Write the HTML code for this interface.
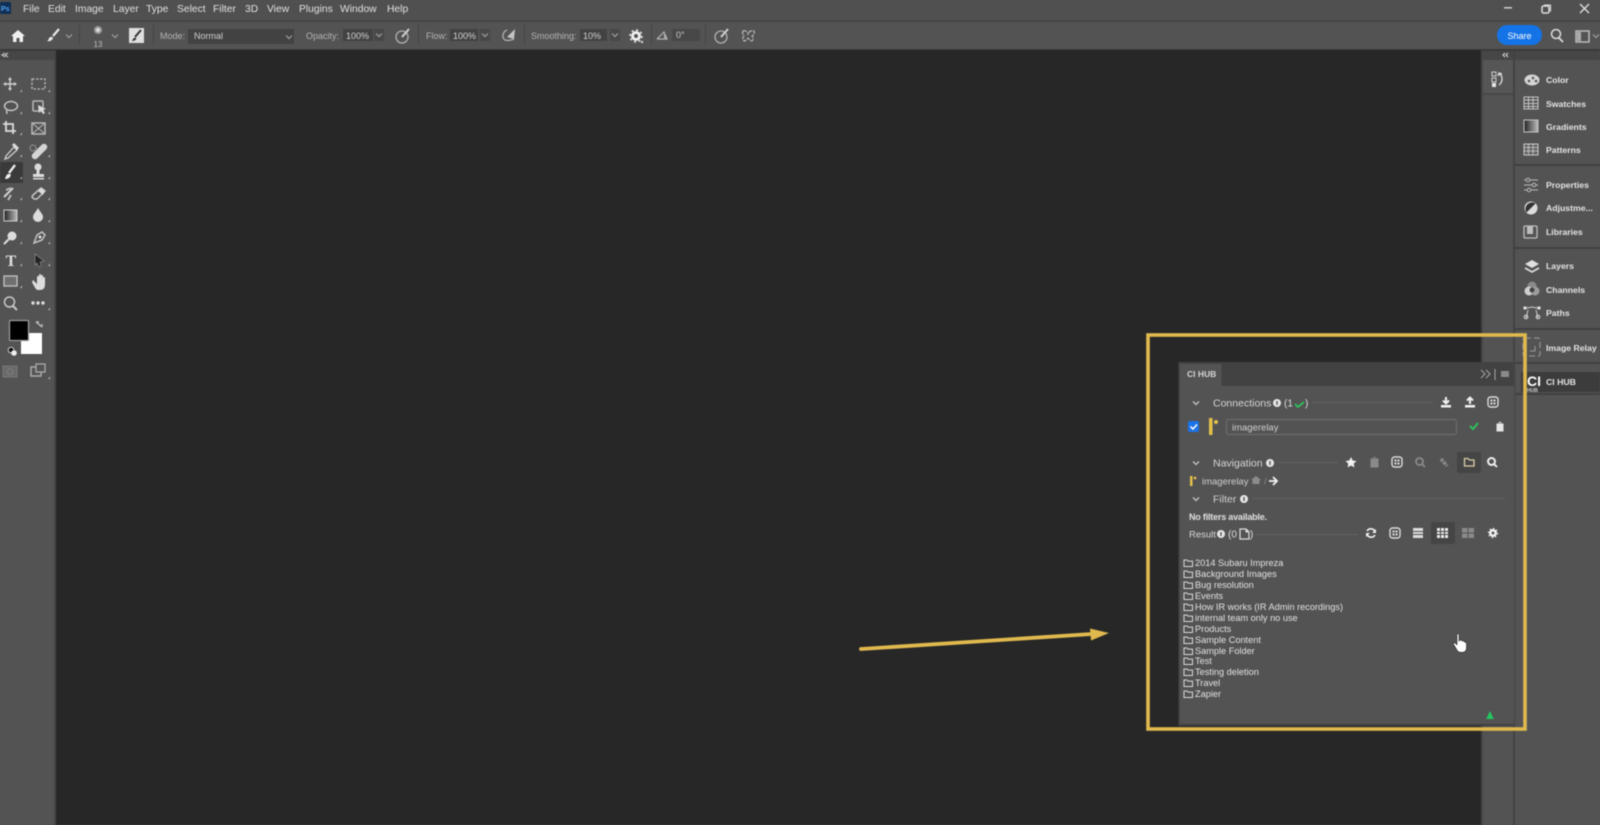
<!DOCTYPE html>
<html><head><meta charset="utf-8"><title>Photoshop CI HUB</title>
<style>
html,body{margin:0;padding:0;width:1600px;height:825px;overflow:hidden;background:#535353}
svg{display:block;position:absolute;left:0;top:0;filter:blur(.55px)}
text{font-family:"Liberation Sans",sans-serif;fill:#dcdcdc;font-size:10px}
.m{font-size:10.3px;fill:#e0e0e0}
.o{font-size:9px;fill:#b4b4b4}
.f{font-size:9.2px;fill:#e2e2e2}
.r{font-size:8.7px;fill:#e4e4e4;font-weight:bold}
.c{font-size:10px;fill:#dedede}
.i{fill:none;stroke:#dcdcdc;stroke-width:1.5}
.s{fill:#dcdcdc}
</style></head><body>
<svg width="1600" height="825" viewBox="0 0 1600 825" xmlns="http://www.w3.org/2000/svg">
<defs>
<g id="fold"><path d="M1 2h3l1 1.100h4.500v5.400H1z" fill="none" stroke="#d8d8d8" stroke-width="1"/></g>
<g id="chev"><path d="M-3-1.500 0 1.500 3-1.500" fill="none" stroke="#c4c4c4" stroke-width="1.300"/></g>
<g id="chevd"><path d="M-3-1.500 0 1.500 3-1.500" fill="none" stroke="#a0a0a0" stroke-width="1.200"/></g>
<g id="info"><circle r="4" fill="#e6e6e6"/><rect x="-.7" y="-2" width="1.400" height="4" fill="#555"/></g>
<g id="grid"><rect x="-5" y="-5" width="10" height="10" rx="2.500" fill="none" stroke="#dcdcdc" stroke-width="1.400"/><rect x="-2.500" y="-2.500" width="2" height="2" fill="#dcdcdc"/><rect x=".5" y="-2.500" width="2" height="2" fill="#dcdcdc"/><rect x="-2.500" y=".5" width="2" height="2" fill="#dcdcdc"/><rect x=".5" y=".5" width="2" height="2" fill="#dcdcdc"/></g>
<g id="tri"><path d="M2 0v-2.500L0 0z" fill="#bdbdbd"/></g>
<radialGradient id="dot"><stop offset="0" stop-color="#fff"/><stop offset="1" stop-color="#666"/></radialGradient>
<linearGradient id="gr"><stop offset="0" stop-color="#222"/><stop offset="1" stop-color="#bbb"/></linearGradient>
</defs>

<!-- base -->
<rect width="1600" height="825" fill="#535353"/>
<rect x="0" y="0" width="1600" height="20" fill="#505050"/>
<rect x="0" y="20" width="1600" height="2" fill="#454545"/>
<rect x="0" y="22" width="1600" height="27" fill="#535353"/>
<rect x="0" y="49" width="1600" height="2" fill="#3a3a3a"/>
<rect x="56" y="50" width="1425" height="775" fill="#272727"/>
<rect x="0" y="51" width="56" height="9" fill="#464646"/>
<rect x="1481" y="51" width="119" height="9" fill="#464646"/>
<rect x="54" y="51" width="2" height="774" fill="#454545"/>
<rect x="1481" y="51" width="2" height="774" fill="#454545"/>
<rect x="1513" y="51" width="2" height="774" fill="#424242"/>
<path d="M5 53 2 55l3 2M8 53 5 55l3 2" class="i" style="stroke-width:1"/>
<path d="M1505 53l-2 2 2 2M1508 53l-2 2 2 2" class="i" style="stroke-width:1"/>

<!-- title bar -->
<rect x="0" y="2" width="11" height="12" rx="1" fill="#0f2f57"/>
<text x="1" y="11" style="font-size:7px;fill:#4ea4f2;font-weight:bold">Ps</text>
<text class="m" x="23" y="12">File</text>
<text class="m" x="48" y="12">Edit</text>
<text class="m" x="75" y="12">Image</text>
<text class="m" x="113" y="12">Layer</text>
<text class="m" x="146" y="12">Type</text>
<text class="m" x="177" y="12">Select</text>
<text class="m" x="213" y="12">Filter</text>
<text class="m" x="245" y="12">3D</text>
<text class="m" x="267" y="12">View</text>
<text class="m" x="299" y="12">Plugins</text>
<text class="m" x="340" y="12">Window</text>
<text class="m" x="387" y="12">Help</text>
<rect x="1504" y="7" width="8" height="1.600" fill="#c8c8c8"/>
<rect x="1542" y="6" width="7" height="7" rx="1.500" class="i"/><path d="M1544 5h6.500v6.500" class="i" style="stroke-width:1.100"/>
<path d="M1580 4l9 9M1589 4l-9 9" class="i" style="stroke-width:1.400"/>

<!-- options bar -->
<path d="M18 30l7 6h-2v6h-3.500v-4h-3v4H13v-6h-2z" fill="#f0f0f0"/>
<path d="M59 29 53 36" stroke="#e8e8e8" stroke-width="2.200" fill="none"/><path d="M49 38c2-2 4-1 4 0s-2 4-6 3c1-.5 2-1.500 2-3z" fill="#e8e8e8"/>
<use href="#chevd" x="69" y="36"/>
<rect x="79" y="25" width="1" height="19" fill="#444"/>
<circle cx="98" cy="30" r="4.500" fill="url(#dot)"/>
<text x="98" y="47" text-anchor="middle" style="font-size:8px;fill:#bdbdbd">13</text>
<use href="#chevd" x="115" y="36"/>
<rect x="129" y="28" width="15" height="15" fill="#dedede"/>
<path d="M141 30 135 37" stroke="#333" stroke-width="2"/><path d="M132 41c1-3 3-4 4-3s-1 3-4 3z" fill="#333"/>
<rect x="153" y="25" width="1" height="19" fill="#444"/>
<text class="o" x="160" y="39">Mode:</text>
<rect x="188" y="29" width="106" height="15" fill="#424242"/>
<text class="o" x="194" y="39" style="fill:#cfcfcf">Normal</text>
<use href="#chevd" x="289" y="37"/>
<text class="o" x="306" y="39">Opacity:</text>
<rect x="343" y="29" width="30" height="12" fill="#424242"/>
<text class="o" x="346" y="39" style="fill:#d2d2d2">100%</text>
<rect x="374" y="29" width="10" height="12" fill="#484848"/><use href="#chevd" x="379" y="35"/>
<circle cx="402" cy="37" r="6" fill="none" stroke="#b0b0b0" stroke-width="1.300"/><path d="M402 37l7-8" stroke="#d0d0d0" stroke-width="2"/>
<rect x="418" y="25" width="1" height="19" fill="#444"/>
<text class="o" x="426" y="39">Flow:</text>
<rect x="450" y="29" width="28" height="12" fill="#424242"/>
<text class="o" x="453" y="39" style="fill:#d2d2d2">100%</text>
<rect x="480" y="29" width="10" height="12" fill="#484848"/><use href="#chevd" x="485" y="35"/>
<path d="M507 30c-5 2-5 8-2 10 3 1 7 0 9-1" fill="none" stroke="#b0b0b0" stroke-width="1.300"/><path d="M507 37l8-8-1 10z" fill="#c4c4c4"/>
<rect x="524" y="25" width="1" height="19" fill="#444"/>
<text class="o" x="531" y="39">Smoothing:</text>
<rect x="580" y="29" width="27" height="12" fill="#424242"/>
<text class="o" x="583" y="39" style="fill:#d2d2d2">10%</text>
<rect x="610" y="29" width="10" height="12" fill="#484848"/><use href="#chevd" x="615" y="35"/>
<circle cx="636" cy="36" r="3.500" fill="none" stroke="#f0f0f0" stroke-width="3"/><circle cx="636" cy="36" r="6" fill="none" stroke="#f0f0f0" stroke-width="1.500" stroke-dasharray="2 2.700"/>
<rect x="641" y="41" width="2" height="2" fill="#ddd"/>
<rect x="651" y="25" width="1" height="19" fill="#444"/>
<path d="M657 39h10l-3-7-7 7M664 35l1.500 4" fill="none" stroke="#b4b4b4" stroke-width="1.200"/>
<rect x="672" y="29" width="28" height="12" fill="#484848"/>
<text class="o" x="676" y="38" style="fill:#c8c8c8">0°</text>
<rect x="705" y="25" width="1" height="19" fill="#444"/>
<circle cx="721" cy="37" r="6" fill="none" stroke="#b0b0b0" stroke-width="1.300"/><path d="M721 37l7-8" stroke="#d0d0d0" stroke-width="2"/>
<path d="M743 31c3-1 5 1 5 4 0-3 3-5 6-4 1 3-1 4-2 5 1 1 2 3 0 5-2 0-3-2-4-3-1 1-2 3-4 3-2-2-1-4 0-5-1-1-2-3-1-5z" fill="none" stroke="#b8b8b8" stroke-width="1.200" stroke-dasharray="4 1"/>
<rect x="1497" y="25" width="45" height="20" rx="10" fill="#1473e6"/>
<text x="1519.500" y="39" text-anchor="middle" style="font-size:9px;fill:#fff">Share</text>
<circle cx="1556" cy="34" r="4.500" class="i"/><path d="M1559 38l4 4" class="i" style="stroke-width:1.800"/>
<rect x="1576" y="31" width="13" height="11" class="i" style="stroke:#bbb"/><rect x="1577" y="32" width="4" height="9" fill="#aaa"/>
<use href="#chevd" x="1596" y="36"/>

<!-- tools -->
<g transform="translate(10 84)"><path d="M0-6v12M-6 0h12" class="i" style="stroke-width:1.400;stroke:#cfcfcf"/><path d="M-2-4 0-7 2-4zM-2 4 0 7 2 4zM-4-2-7 0-4 2zM4-2 7 0 4 2z" fill="#cfcfcf"/></g><use href="#tri" x="20" y="92"/>
<rect x="32" y="79" width="13" height="10" fill="none" stroke="#b8b8b8" stroke-width="1.300" stroke-dasharray="2.500 1.500"/><use href="#tri" x="48" y="92"/>
<ellipse cx="11" cy="106" rx="6.500" ry="4.500" class="i" style="stroke:#c4c4c4"/><path d="M7 110c-1 2 0 3 0 4" class="i" style="stroke:#c4c4c4"/><use href="#tri" x="20" y="114"/>
<rect x="33" y="101" width="10" height="10" rx="1" class="i" style="stroke:#b8b8b8"/><path d="M38 105l8 4-3 1 2 3-2 1-2-3-2 2z" class="s"/><use href="#tri" x="48" y="114"/>
<path d="M6 121v10h10M3 124h10v10" class="i" style="stroke-width:1.800"/><use href="#tri" x="20" y="135"/>
<rect x="32" y="123" width="13" height="11" class="i" style="stroke:#b8b8b8"/><path d="M32 123l13 11M45 123l-13 11" class="i" style="stroke-width:1;stroke:#b8b8b8"/>
<path d="M6 156l8-9 3 3-9 8-3 1z" fill="none" stroke="#cfcfcf" stroke-width="1.300"/><path d="M13 144l5 5" stroke="#dcdcdc" stroke-width="3"/><use href="#tri" x="20" y="157"/>
<path d="M35 156l9-9" stroke="#d4d4d4" stroke-width="6.500" stroke-linecap="round"/><circle cx="33" cy="148" r="3" fill="none" stroke="#bbb" stroke-dasharray="1.500 1"/><use href="#tri" x="48" y="157"/>
<rect x="0" y="162" width="23" height="21" fill="#3a3a3a"/>
<path d="M15 165 9 173" stroke="#f0f0f0" stroke-width="2.300"/><path d="M5 179c1-4 3-6 5-5s0 5-5 5z" fill="#f0f0f0"/><use href="#tri" x="20" y="179"/>
<circle cx="38" cy="167" r="3.500" class="s"/><rect x="36.500" y="169" width="3" height="5" class="s"/><rect x="33" y="174" width="11" height="3" class="s"/><rect x="33" y="178" width="11" height="1.500" class="s"/><use href="#tri" x="48" y="179"/>
<path d="M4 197l9-9" stroke="#d0d0d0" stroke-width="2"/><path d="M6 190l5-2M11 195l-3 5" stroke="#bdbdbd" stroke-width="2"/><use href="#tri" x="20" y="200"/>
<path d="M33 195l8-7 4 3-8 8h-3l-2-2z" class="i" style="stroke:#c4c4c4"/><path d="M38 191l5 4 2-4-3-3z" class="s"/><use href="#tri" x="48" y="200"/>
<rect x="4" y="210" width="13" height="11" fill="url(#gr)" stroke="#d0d0d0"/><use href="#tri" x="20" y="222"/>
<path d="M38 208c-2 4-5 6-5 9a5 5 0 0 0 10 0c0-3-3-5-5-9z" class="s"/><use href="#tri" x="48" y="222"/>
<circle cx="12" cy="236" r="4.500" class="s"/><path d="M9 239l-5 5" class="i" style="stroke-width:2"/><use href="#tri" x="20" y="244"/>
<path d="M34 243l3-8 5-3 3 3-3 5-8 3z" class="i" style="stroke:#c4c4c4"/><circle cx="40" cy="237" r="1.500" class="s"/><use href="#tri" x="48" y="244"/>
<text x="11" y="266" text-anchor="middle" style="font-family:'Liberation Serif',serif;font-size:16px;font-weight:bold;fill:#e0e0e0">T</text><use href="#tri" x="20" y="266"/>
<path d="M35 254l9 7-4 1 1 4-2 1-2-4-2 2z" fill="#222" stroke="#999" stroke-width=".6"/><use href="#tri" x="48" y="266"/>
<rect x="4" y="276" width="13" height="10" fill="#6f6f6f" stroke="#c4c4c4" stroke-width="1.300"/><use href="#tri" x="20" y="288"/>
<path d="M33 280l4 4v-7a1 1 0 0 1 2 0v5-7a1 1 0 0 1 2 0v7-6a1 1 0 0 1 2 0v6-4a1 1 0 0 1 2 0v7c0 3-2 5-5 5h-2c-2 0-3-2-6-8z" class="s"/>
<circle cx="9.500" cy="302" r="5" class="i" style="stroke:#c8c8c8"/><path d="M13 306l4 4" class="i" style="stroke-width:2;stroke:#c8c8c8"/>
<circle cx="33" cy="303" r="1.700" class="s"/><circle cx="38" cy="303" r="1.700" class="s"/><circle cx="43" cy="303" r="1.700" class="s"/><use href="#tri" x="48" y="310"/>
<rect x="21" y="333" width="21" height="21" fill="#fff"/>
<rect x="9.500" y="320.500" width="19" height="20" rx="1" fill="#000" stroke="#9a9a9a" stroke-width="1.300"/>
<path d="M36 322l6 5M36 322h3M42 327v-3" class="i" style="stroke-width:1.400;stroke:#bbb"/>
<circle cx="11" cy="350" r="2.800" fill="#111" stroke="#ccc"/><circle cx="14" cy="353" r="2.800" fill="#eee"/>
<rect x="3" y="366" width="14" height="11" fill="#6a6a6a" stroke="#777"/><circle cx="10" cy="371.500" r="3" fill="none" stroke="#7c7c7c"/>
<rect x="31" y="367" width="10" height="9" class="i" style="stroke:#aaa"/><rect x="36" y="364" width="9" height="8" fill="#535353" stroke="#aaa" stroke-width="1.300"/><use href="#tri" x="48" y="379"/>

<!-- right collapsed column -->
<rect x="1483" y="60" width="30" height="33" fill="#565656"/><rect x="1483" y="93" width="30" height="2" fill="#484848"/>
<rect x="1492" y="72" width="4" height="4" fill="none" stroke="#cfcfcf"/><rect x="1492" y="78" width="4" height="4" fill="none" stroke="#cfcfcf"/><rect x="1492" y="83" width="4" height="4" fill="#e6e6e6"/>
<path d="M1499 74c4 1 4 8 0 11M1498 76l1-3 3 1" class="i" style="stroke-width:1.300"/>

<!-- right panel list -->
<rect x="1515" y="164" width="85" height="2" fill="#414141"/>
<rect x="1515" y="247" width="85" height="2" fill="#414141"/>
<rect x="1515" y="328" width="85" height="2" fill="#414141"/>
<rect x="1515" y="362" width="85" height="2" fill="#414141"/>
<rect x="1515" y="393" width="85" height="2" fill="#414141"/>
<rect x="1521" y="372" width="79" height="20" fill="#3c3c3c"/>

<ellipse cx="1532" cy="80" rx="7.500" ry="5.500" fill="#d4d4d4"/><circle cx="1529" cy="81" r="1.300" fill="#535353"/><circle cx="1533" cy="78" r="1.300" fill="#535353"/><circle cx="1536" cy="81" r="1.300" fill="#535353"/>
<text class="r" x="1546" y="83">Color</text>
<rect x="1524" y="97" width="14" height="12" fill="none" stroke="#c4c4c4"/><path d="M1524 100h14M1524 103.500h14M1524 106.500h14M1528.500 97v12M1533 97v12" stroke="#c4c4c4" stroke-width="1"/>
<text class="r" x="1546" y="107">Swatches</text>
<rect x="1524" y="120" width="14" height="12" fill="url(#gr)" stroke="#c4c4c4"/>
<text class="r" x="1546" y="130">Gradients</text>
<rect x="1524" y="144" width="14" height="11" fill="#666" stroke="#c4c4c4"/><path d="M1524 147.500h14M1524 151h14M1528.500 144v11M1533 144v11" stroke="#e0e0e0" stroke-dasharray="1.500 1"/>
<text class="r" x="1546" y="153">Patterns</text>
<path d="M1524 180h14M1524 185h14M1524 190h14" stroke="#b8b8b8"/><circle cx="1528" cy="180" r="1.800" fill="#535353" stroke="#b8b8b8"/><circle cx="1534" cy="185" r="1.800" fill="#535353" stroke="#b8b8b8"/><circle cx="1529" cy="190" r="1.800" fill="#535353" stroke="#b8b8b8"/>
<text class="r" x="1546" y="188">Properties</text>
<circle cx="1531" cy="208" r="6.500" fill="#ddd"/><path d="M1526.500 212.500a6.500 6.500 0 0 1 9-9z" fill="#333"/>
<text class="r" x="1546" y="211">Adjustme...</text>
<rect x="1524" y="226" width="13" height="12" rx="1" fill="none" stroke="#bdbdbd" stroke-width="1.300"/><rect x="1527" y="226" width="6" height="8" fill="#bdbdbd"/>
<text class="r" x="1546" y="235">Libraries</text>
<path d="M1532 260l7 4-7 4-7-4z" fill="#e0e0e0"/><path d="M1525 268l7 4 7-4" fill="none" stroke="#e0e0e0" stroke-width="1.600"/>
<text class="r" x="1546" y="269">Layers</text>
<circle cx="1532" cy="286" r="4.500" fill="#8a8a8a"/><circle cx="1529" cy="291" r="4.500" fill="#cfcfcf"/><circle cx="1535" cy="291" r="4.500" fill="#9c9c9c"/><circle cx="1532" cy="290" r="2.500" fill="#444"/>
<text class="r" x="1546" y="293">Channels</text>
<path d="M1525 308c3 0 4 0 7-1 3 1 4 1 7 1M1528 310l-2 8M1536 310l2 8" fill="none" stroke="#cfcfcf"/><rect x="1523.500" y="306.500" width="3" height="3" fill="#ddd"/><rect x="1537.500" y="306.500" width="3" height="3" fill="#ddd"/><circle cx="1526" cy="317" r="1.800" fill="none" stroke="#ddd"/><circle cx="1538" cy="317" r="1.800" fill="none" stroke="#ddd"/>
<text class="r" x="1546" y="316">Paths</text>
<rect x="1523" y="338" width="17" height="18" rx="2" fill="none" stroke="#8e8e8e" stroke-width="1.300" stroke-dasharray="6 3"/><path d="M1535 346v5h-5" fill="none" stroke="#9c9c9c"/>
<text class="r" x="1546" y="351">Image Relay</text>
<text x="1527" y="386" style="font-size:14px;font-weight:bold;fill:#fff">CI</text>
<text x="1527" y="392" style="font-size:5px;font-weight:bold;fill:#ccc">HUB</text>
<text class="r" x="1546" y="385">CI HUB</text>

<!-- CI HUB panel -->
<rect x="1179.500" y="362" width="335.500" height="364" fill="#535353"/>
<rect x="1179.500" y="362" width="335.500" height="24" fill="#424242"/>
<rect x="1179.500" y="364" width="42" height="23" fill="#535353"/>
<rect x="1179.500" y="724" width="335.500" height="2" fill="#414141"/>
<rect x="1514" y="362" width="1.500" height="364" fill="#484848"/>
<rect x="1178.500" y="362" width="1.500" height="364" fill="#474747"/>
<text x="1187" y="377" style="font-size:8.500px;font-weight:bold;fill:#d6d6d6">CI HUB</text>
<path d="M1481 370l4 4-4 4M1486 370l4 4-4 4" fill="none" stroke="#a8a8a8" stroke-width="1"/>
<rect x="1494.500" y="369" width="1" height="11" fill="#a8a8a8"/>
<rect x="1501" y="371" width="8" height="6" fill="#8a8a8a"/>

<use href="#chev" x="1196" y="403"/>
<text x="1213" y="406.500" style="font-size:10.500px;fill:#d6d6d6">Connections</text>
<use href="#info" x="1277" y="403"/>
<text x="1284" y="406.500" class="c">(1</text>
<path d="M1295 404l3 3 6-5" fill="none" stroke="#2fbf5b" stroke-width="1.800"/>
<text x="1305" y="406.500" class="c">)</text>
<rect x="1312" y="402" width="121" height="1" fill="#636363"/>

<path d="M1446 397v6M1443 400.500l3 3 3-3" stroke="#f0f0f0" fill="none" stroke-width="2"/><rect x="1441" y="405" width="10" height="2.500" fill="#f0f0f0"/>
<path d="M1470 404v-6M1467 400.500l3-3 3 3" stroke="#f0f0f0" fill="none" stroke-width="2"/><rect x="1465" y="405" width="10" height="2.500" fill="#f0f0f0"/>
<use href="#grid" x="1493" y="402"/>

<rect x="1188" y="421" width="11" height="11" rx="2" fill="#1a73e8"/><path d="M1190.500 426.500l2.500 2.500 4-4.500" fill="none" stroke="#fff" stroke-width="1.500"/>
<rect x="1209" y="418" width="3.500" height="17" fill="#e3c04a"/><circle cx="1216" cy="422" r="2" fill="#e3c04a"/>
<rect x="1226.500" y="419.500" width="230" height="15" rx="2" fill="#535353" stroke="#6b6b6b" stroke-width="1.200"/>
<text x="1232" y="430.500" style="font-size:9.500px;fill:#cfcfcf">imagerelay</text>
<path d="M1470 426l3 3 5-6" fill="none" stroke="#2fbf5b" stroke-width="2"/>
<path d="M1497 424h6v7h-6zM1498.500 422.500h3" fill="#e6e6e6" stroke="#e6e6e6"/>

<use href="#chev" x="1196" y="463"/>
<text x="1213" y="466.500" style="font-size:10.500px;fill:#d6d6d6">Navigation</text>
<use href="#info" x="1270" y="463"/>
<rect x="1279" y="462" width="59" height="1" fill="#636363"/>
<path d="M1351 457l1.700 3.500 3.800.5-2.800 2.600.7 3.800-3.400-1.900-3.400 1.900.7-3.800-2.800-2.600 3.800-.5z" fill="#f2f2f2"/>
<path d="M1371 459h7v8h-7zM1373 457.500h3" fill="#8a8a8a" stroke="#8a8a8a"/>
<use href="#grid" x="1397" y="462"/>
<circle cx="1419.500" cy="461.500" r="3.500" fill="none" stroke="#8a8a8a" stroke-width="1.800"/><path d="M1422 464l3 3" stroke="#8a8a8a" stroke-width="1.800"/>
<path d="M1441 459l6 7" stroke="#8a8a8a" stroke-width="3.500" stroke-dasharray="3 1"/>
<rect x="1457" y="452" width="24" height="21" rx="2" fill="#454545"/>
<path d="M1464.500 458.500h3.500l1.500 1.500h4.500v6h-9.500z" fill="none" stroke="#dccfa8" stroke-width="1.300"/>
<circle cx="1491.500" cy="461.500" r="3.500" fill="none" stroke="#f2f2f2" stroke-width="1.900"/><path d="M1494 464l3 3" stroke="#f2f2f2" stroke-width="1.900"/>

<rect x="1190" y="476" width="2.500" height="10" fill="#e3c04a"/><circle cx="1195" cy="478" r="1.400" fill="#e3c04a"/>
<text x="1202" y="484.500" style="font-size:9.500px;fill:#cfcfcf">imagerelay</text>
<path d="M1256 476l5 4h-1.500v4h-7v-4H1251z" fill="#8c8c8c"/>
<text x="1264" y="484.500" style="font-size:9.500px;fill:#8c8c8c">/</text>
<path d="M1269 481h7M1273 477l4 4-4 4" fill="none" stroke="#f0f0f0" stroke-width="1.800"/>

<use href="#chev" x="1196" y="499"/>
<text x="1213" y="502.500" style="font-size:10.500px;fill:#d0d0d0">Filter</text>
<use href="#info" x="1244" y="499"/>
<rect x="1253" y="498" width="252" height="1" fill="#636363"/>
<text x="1189" y="520" style="font-size:9px;fill:#e0e0e0;font-weight:bold;letter-spacing:-.2px">No filters available.</text>
<text x="1189" y="537.500" style="font-size:9.500px;fill:#d8d8d8">Result</text>
<use href="#info" x="1221" y="534"/>
<text x="1228" y="537.500" class="c">(0</text>
<path d="M1240 529h6l3 3v7h-9z" fill="none" stroke="#dcdcdc" stroke-width="1.200"/><path d="M1246 529v3h3" fill="#dcdcdc" stroke="#dcdcdc"/>
<text x="1250" y="537.500" class="c">)</text>
<rect x="1257" y="534" width="101" height="1" fill="#636363"/>
<path d="M1367 531a4.500 4.500 0 0 1 8 .5M1375 535a4.500 4.500 0 0 1-8-.5" fill="none" stroke="#f0f0f0" stroke-width="1.600"/><path d="M1376 529v4h-4zM1366 537v-4h4z" fill="#f0f0f0"/>
<use href="#grid" x="1395" y="533"/>
<rect x="1413" y="528" width="10" height="10" fill="#dcdcdc"/><path d="M1413 531.500h10M1413 534.500h10" stroke="#535353"/>
<rect x="1431" y="522" width="24" height="22" rx="2" fill="#454545"/>
<rect x="1437" y="528" width="11" height="10" fill="#ececec"/><path d="M1437 531.500h11M1437 534.500h11M1440.500 528v10M1444.500 528v10" stroke="#454545"/>
<rect x="1462" y="528" width="12" height="10" fill="#8a8a8a"/><path d="M1462 533h12M1468 528v10" stroke="#535353"/>
<circle cx="1493" cy="533" r="2.700" fill="none" stroke="#f2f2f2" stroke-width="2.500"/><circle cx="1493" cy="533" r="4.500" fill="none" stroke="#f2f2f2" stroke-width="1.200" stroke-dasharray="1.500 2"/>

<!-- folder list -->
<use href="#fold" x="1183" y="558"/><text class="f" x="1195" y="566">2014 Subaru Impreza</text>
<use href="#fold" x="1183" y="569"/><text class="f" x="1195" y="577">Background Images</text>
<use href="#fold" x="1183" y="580"/><text class="f" x="1195" y="588">Bug resolution</text>
<use href="#fold" x="1183" y="591"/><text class="f" x="1195" y="599">Events</text>
<use href="#fold" x="1183" y="602"/><text class="f" x="1195" y="610">How IR works (IR Admin recordings)</text>
<use href="#fold" x="1183" y="613"/><text class="f" x="1195" y="621">internal team only no use</text>
<use href="#fold" x="1183" y="624"/><text class="f" x="1195" y="632">Products</text>
<use href="#fold" x="1183" y="635"/><text class="f" x="1195" y="643">Sample Content</text>
<use href="#fold" x="1183" y="646"/><text class="f" x="1195" y="654">Sample Folder</text>
<use href="#fold" x="1183" y="656"/><text class="f" x="1195" y="664">Test</text>
<use href="#fold" x="1183" y="667"/><text class="f" x="1195" y="675">Testing deletion</text>
<use href="#fold" x="1183" y="678"/><text class="f" x="1195" y="686">Travel</text>
<use href="#fold" x="1183" y="689"/><text class="f" x="1195" y="697">Zapier</text>

<!-- cursor + green marker -->
<path d="M1457 634c1-1 2 0 2 1v6l1-1c1 0 2 0 2 1l1 0c1 0 1.500.5 1.500 1l1 .3c1 0 1 1 1 2v4c0 2-1.500 4-4 4h-2c-2 0-3-1-4-3l-3-5c-.5-1 1-2 2-1l1.500 1.500z" fill="#fff" stroke="#222" stroke-width=".6"/>
<path d="M1490 711l3.800 8h-7.600z" fill="#22c65e"/>

<!-- annotations -->
<rect x="1148" y="335" width="377" height="394" fill="none" stroke="#e0b94e" stroke-width="3.600"/>
<path d="M861 649 1092 634" stroke="#e0b94e" stroke-width="3.800" stroke-linecap="round"/>
<path d="M1090 628.500l19 4.500-18 7.500z" fill="#e0b94e"/>
</svg>
</body></html>
